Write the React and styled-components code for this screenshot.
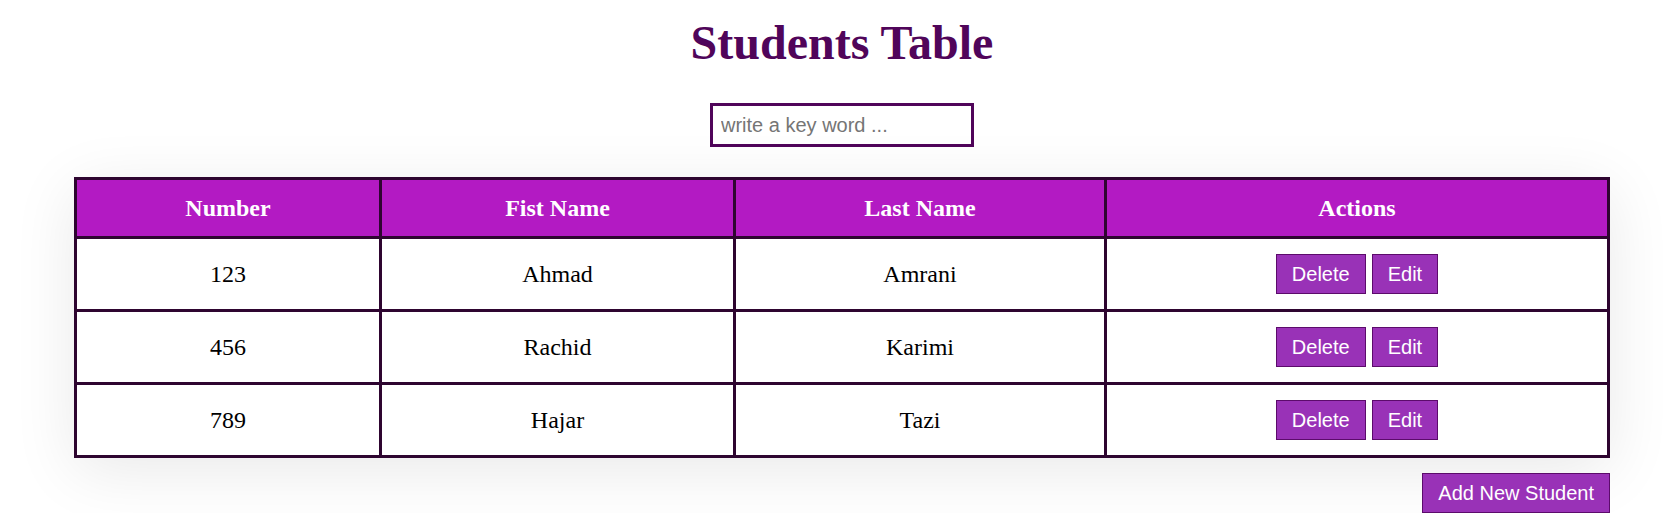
import React, { useState } from "react";
import styled, { createGlobalStyle } from "styled-components";

const GlobalStyle = createGlobalStyle`
  body {
    margin: 0;
    background: #ffffff;
    font-family: "Liberation Serif", "Times New Roman", serif;
  }
`;

const students = [
  { number: 123, first: "Ahmad", last: "Amrani" },
  { number: 456, first: "Rachid", last: "Karimi" },
  { number: 789, first: "Hajar", last: "Tazi" },
];

export default function App() {
  const [keyword, setKeyword] = useState("");

  const rows = students.filter((s) =>
    `${s.number} ${s.first} ${s.last}`.toLowerCase().includes(keyword.toLowerCase())
  );

  return (
    <>
      <GlobalStyle />
      <Page>
        <Title>Students Table</Title>
        <SearchBar>
          <SearchInput
            type="text"
            placeholder="write a key word ..."
            value={keyword}
            onChange={(e) => setKeyword(e.target.value)}
          />
        </SearchBar>
        <TableSection>
          <Table>
            <thead>
              <HeadRow>
                <HeadCell $width={302}>Number</HeadCell>
                <HeadCell $width={351}>Fist Name</HeadCell>
                <HeadCell $width={368}>Last Name</HeadCell>
                <HeadCell $width={500}>Actions</HeadCell>
              </HeadRow>
            </thead>
            <tbody>
              {rows.map((s) => (
                <BodyRow key={s.number}>
                  <Cell>{s.number}</Cell>
                  <Cell>{s.first}</Cell>
                  <Cell>{s.last}</Cell>
                  <Cell>
                    <Actions>
                      <ActionButton>Delete</ActionButton>
                      <ActionButton>Edit</ActionButton>
                    </Actions>
                  </Cell>
                </BodyRow>
              ))}
            </tbody>
          </Table>
          <Footer>
            <ActionButton>Add New Student</ActionButton>
          </Footer>
        </TableSection>
      </Page>
    </>
  );
}

const Page = styled.div`
  padding: 15px 0 0 6px;
  display: flex;
  flex-direction: column;
  align-items: center;
`;

const Title = styled.h1`
  margin: 0;
  font-family: "Liberation Serif", "Times New Roman", serif;
  font-size: 48px;
  line-height: 55px;
  font-weight: bold;
  color: #50055a;
  text-align: center;
`;

const SearchBar = styled.div`
  margin-top: 33px;
  display: flex;
  justify-content: center;
`;

const SearchInput = styled.input`
  box-sizing: border-box;
  width: 264px;
  height: 44px;
  padding: 0 8px;
  border: 3px solid #50055a;
  outline: none;
  font-family: "Liberation Sans", Arial, sans-serif;
  font-size: 20px;
  color: #000;

  &::placeholder {
    color: #757575;
  }
`;

const TableSection = styled.div`
  margin-top: 30px;
  width: 1536px;
  display: flex;
  flex-direction: column;
`;

const Table = styled.table`
  width: 1536px;
  border-collapse: collapse;
  table-layout: fixed;
  border: 3px solid #2e0530;
  background: #ffffff;
  box-shadow: 0 12px 60px rgba(0, 0, 0, 0.09);
`;

const HeadRow = styled.tr`
  height: 59px;
  background: #b31ac3;
`;

const BodyRow = styled.tr`
  height: 73px;
`;

const HeadCell = styled.th`
  width: ${(p) => p.$width}px;
  padding: 0;
  border: 3px solid #2e0530;
  color: #ffffff;
  font-family: "Liberation Serif", "Times New Roman", serif;
  font-size: 24px;
  font-weight: bold;
  text-align: center;
  vertical-align: middle;
`;

const Cell = styled.td`
  padding: 0;
  border: 3px solid #2e0530;
  color: #000;
  font-family: "Liberation Serif", "Times New Roman", serif;
  font-size: 24px;
  text-align: center;
  vertical-align: middle;
`;

const Actions = styled.div`
  display: flex;
  justify-content: center;
  gap: 6px;
`;

const ActionButton = styled.button`
  box-sizing: border-box;
  height: 40px;
  padding: 0 15px;
  border: 1px solid #5c0b6b;
  border-radius: 0;
  background: #9932b7;
  color: #ffffff;
  font-family: "Liberation Sans", Arial, sans-serif;
  font-size: 20px;
  cursor: pointer;
`;

const Footer = styled.div`
  margin-top: 15px;
  display: flex;
  justify-content: flex-end;
`;
